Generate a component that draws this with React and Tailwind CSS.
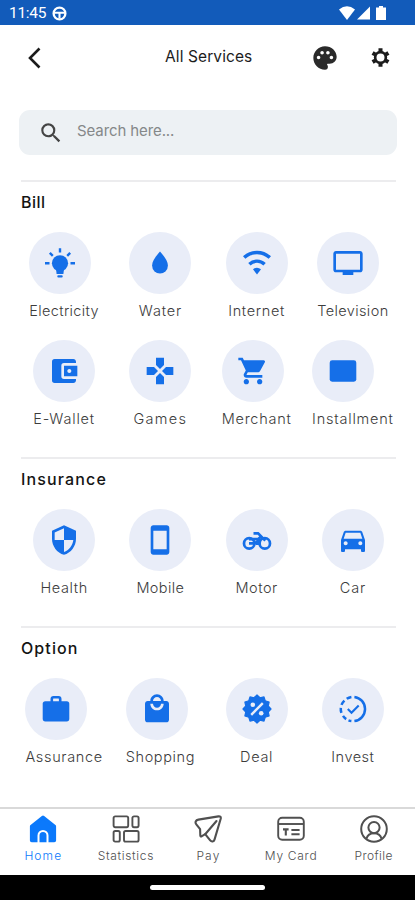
import React from 'react';
import {
    MdPalette,
    MdSearch,
    MdTv,
    MdAccountBalanceWallet,
    MdGames,
    MdShoppingCart,
    MdSecurity,
    MdStayPrimaryPortrait,
    MdDirectionsCar,
    MdLocalMall,
} from 'react-icons/md';

// Icons that the material set doesn't have
const GearIcon = ({ className }) => (
    <svg viewBox="0 0 22 22" className={className} fill="none" stroke="currentColor">
        <circle cx="11" cy="11" r="5.6" strokeWidth="2.8" />
        <path
            d="M11 1.400v3.600M11 17v3.600M2.700 6.200l3.100 1.800M16.200 14l3.100 1.800M2.700 15.800l3.100-1.800M16.200 8l3.100-1.800"
            strokeWidth="4.2"
        />
    </svg>
);

const BulbIcon = ({ className }) => (
    <svg viewBox="0 0 32 32" className={className} fill="currentColor">
        <circle cx="16" cy="16.300" r="8.1" />
        <path d="M12 22h8l-.6 5h-6.800z" />
        <rect x="13.3" y="28.2" width="5.4" height="2.4" rx="1" />
        <path d="M16 1.200v4.200M5.800 5.800l3 3M26.200 5.800l-3 3M1 16.200h4.500M26.500 16.200h4.500" stroke="currentColor" strokeWidth="2.4" />
    </svg>
);

const DropIcon = ({ className }) => (
    <svg viewBox="0 0 32 32" className={className} fill="currentColor">
        <path d="M16 4.500c-4.600 5.400-7.900 9.800-7.900 14.100a7.900 7.900 0 0 0 15.800 0c0-4.300-3.300-8.700-7.900-14.100z" />
    </svg>
);

const WifiIcon = ({ className }) => (
    <svg viewBox="0 0 32 32" className={className} fill="none" stroke="currentColor" strokeWidth="3.4">
        <path d="M3.200 10.600a18.500 18.500 0 0 1 25.600 0" />
        <path d="M8.400 17.200a11 11 0 0 1 15.200 0" />
        <path d="M12 22.300q4-3.300 8 0L16 27.600z" fill="currentColor" stroke="none" />
    </svg>
);

const CardIcon = ({ className }) => (
    <svg viewBox="0 0 32 32" className={className} fill="currentColor">
        <rect x="2.7" y="5.3" width="26.6" height="21.4" rx="2.4" />
    </svg>
);

const MotorIcon = ({ className }) => (
    <svg viewBox="0 0 32 32" className={className} fill="none" stroke="currentColor" strokeWidth="2.7">
        <circle cx="8.2" cy="19.4" r="5.2" />
        <circle cx="23.8" cy="19.4" r="5.2" />
        <path d="M12.500 9.400h4.600l7.200 7.200" />
        <path d="M8 15.200h9l3-2.600M8 19.400h5.200c1.600 0 4-2.400 5.600-5.200" />
        <path d="M13 18l2 3h3.500L19 15z" fill="currentColor" stroke="none" />
    </svg>
);

const BriefcaseIcon = ({ className }) => (
    <svg viewBox="0 0 32 32" className={className}>
        <rect x="2.7" y="8.2" width="26.6" height="20.2" rx="2.6" fill="currentColor" />
        <path d="M11.800 9V5.900q0-1.600 1.600-1.600h5.200q1.600 0 1.600 1.600V9" fill="none" stroke="currentColor" strokeWidth="2.6" />
    </svg>
);

const burst = Array.from({ length: 24 }, (_, i) => {
    const r = i % 2 ? 11.6 : 14;
    const a = (i * Math.PI) / 12;
    return `${(16 + r * Math.sin(a)).toFixed(2)},${(16 - r * Math.cos(a)).toFixed(2)}`;
}).join(' ');

const DealIcon = ({ className }) => (
    <svg viewBox="0 0 32 32" className={className}>
        <polygon points={burst} fill="currentColor" stroke="currentColor" strokeWidth="1.2" strokeLinejoin="round" />
        <path d="M21.800 10.200l-11.600 11.600" stroke="#e9edf8" strokeWidth="2.4" />
        <circle cx="11.8" cy="11.8" r="2.3" fill="#e9edf8" />
        <circle cx="20.2" cy="20.2" r="2.3" fill="#e9edf8" />
    </svg>
);

const InvestIcon = ({ className }) => (
    <svg viewBox="0 0 32 32" className={className} fill="none" stroke="currentColor" strokeWidth="2.5">
        <path d="M17.400 3.900a12.200 12.200 0 0 1 0 24.200" />
        <path d="M14.400 3.900a12.200 12.200 0 0 0-4.700 1.900M7.400 7.600a12.200 12.200 0 0 0-2.900 4.300M3.800 14.800a12.200 12.200 0 0 0 .6 5M6 22.900a12.200 12.200 0 0 0 3.200 3.200M11.500 27.400a12.200 12.200 0 0 0 2.900.7" />
        <path d="M10.800 16l3.700 3.700 7.200-7.200" strokeWidth="2.1" />
    </svg>
);

const HomeIcon = ({ className }) => (
    <svg viewBox="0 0 28 28" className={className}>
        <path d="M14 2.400L2.700 11.500v14h22.600v-14z" fill="currentColor" stroke="currentColor" strokeWidth="3.6" strokeLinejoin="round" />
        <path d="M9.500 28v-7.500a4.500 4.500 0 0 1 9 0V28" fill="none" stroke="#fff" strokeWidth="2" />
    </svg>
);

const StatsIcon = ({ className }) => (
    <svg viewBox="0 0 28 28" className={className} fill="none" stroke="currentColor" strokeWidth="1.9">
        <rect x="1.6" y="1.4" width="14.6" height="10.8" rx="1.6" />
        <rect x="20.4" y="1.4" width="6.2" height="10.8" rx="1.6" />
        <rect x="1.6" y="16" width="6.2" height="10.6" rx="1.6" />
        <rect x="12" y="16" width="14.6" height="10.6" rx="1.6" />
    </svg>
);

const PayIcon = ({ className }) => (
    <svg viewBox="0 0 28 28" className={className} fill="none" stroke="currentColor" strokeWidth="2.1" strokeLinejoin="round" strokeLinecap="round">
        <path d="M24.400 1.400L4.400 4.600C1.600 5.100.8 7.600 2.300 9.400l3.800 4.800.2 6.200q.2 1.800 1.600.8l3.300-2 5 6.200c1.400 1.700 3.700 1.300 4.300-.8L26.700 3.700q.6-2.600-2.300-2.300z" />
        <path d="M11.200 19.200L22.500 6" />
    </svg>
);

const MyCardIcon = ({ className }) => (
    <svg viewBox="0 0 28 28" className={className} fill="none" stroke="currentColor" strokeWidth="1.9">
        <rect x="1.2" y="2.8" width="25.6" height="22" rx="4" />
        <path d="M1.200 9h25.600" />
        <path d="M6 14.400h5.600M8.800 14.400v6M14.400 15h8.200M14.400 19.200h8.200" strokeWidth="2.1" />
    </svg>
);

const ProfileIcon = ({ className }) => (
    <svg viewBox="0 0 28 28" className={className} fill="none" stroke="currentColor" strokeWidth="2">
        <circle cx="14" cy="14" r="12.8" />
        <circle cx="14" cy="12.6" r="5.6" />
        <path d="M6.400 23.800c1-3.600 3.800-5.600 7.600-5.600s6.600 2 7.600 5.600" />
    </svg>
);

const sections = [
    {
        title: 'Bill',
        titleClass: 'tracking-[0.5px]',
        items: [
            { label: 'Electricity', icon: BulbIcon, tracking: 'tracking-[0.35px]' },
            { label: 'Water', icon: DropIcon, tracking: 'tracking-[0.8px]' },
            { label: 'Internet', icon: WifiIcon, tracking: 'tracking-[0.65px]' },
            { label: 'Television', icon: MdTv, tracking: 'tracking-[0.4px]' },
            { label: 'E-Wallet', icon: MdAccountBalanceWallet, tracking: 'tracking-[0.8px]' },
            { label: 'Games', icon: MdGames, tracking: 'tracking-[1.3px]' },
            { label: 'Merchant', icon: MdShoppingCart, tracking: 'tracking-[0.75px]' },
            { label: 'Installment', icon: CardIcon, tracking: 'tracking-[0.8px]' },
        ],
    },
    {
        title: 'Insurance',
        titleClass: 'tracking-[1.15px]',
        items: [
            { label: 'Health', icon: MdSecurity, tracking: 'tracking-[0.6px]' },
            { label: 'Mobile', icon: MdStayPrimaryPortrait, tracking: 'tracking-[0.4px]' },
            { label: 'Motor', icon: MotorIcon, tracking: 'tracking-[0.5px]' },
            { label: 'Car', icon: MdDirectionsCar, tracking: 'tracking-[0.8px]' },
        ],
    },
    {
        title: 'Option',
        titleClass: 'tracking-[1.1px]',
        items: [
            { label: 'Assurance', icon: BriefcaseIcon, tracking: 'tracking-[0.65px]' },
            { label: 'Shopping', icon: MdLocalMall, tracking: 'tracking-[0.6px]' },
            { label: 'Deal', icon: DealIcon, tracking: 'tracking-[0.7px]' },
            { label: 'Invest', icon: InvestIcon, tracking: 'tracking-[0.5px]' },
        ],
    },
];

const tabs = [
    { label: 'Home', icon: HomeIcon, active: true, tracking: 'tracking-[1.1px]' },
    { label: 'Statistics', icon: StatsIcon, tracking: 'tracking-[0.65px]' },
    { label: 'Pay', icon: PayIcon, tracking: 'tracking-[1.2px]' },
    { label: 'My Card', icon: MyCardIcon, tracking: 'tracking-[0.7px]' },
    { label: 'Profile', icon: ProfileIcon, tracking: 'tracking-[0.4px]' },
];

const StatusBar = () => (
    <div className="h-[25px] bg-[#125bba] flex items-center pl-[9px] pr-[29px] text-white">
        <span className="font-[Roboto] text-[15.5px] leading-none pt-[3px] tracking-[-0.3px]">11:45</span>
        <svg viewBox="0 0 16 16" className="size-[15px] ml-[6px] mt-[2px]" fill="none" stroke="currentColor">
            <circle cx="8" cy="8" r="6.3" strokeWidth="2.4" />
            <path d="M2 7.200h12M8 8v5" strokeWidth="2.2" />
        </svg>
        <div className="ml-auto flex items-center gap-[2px] pt-[1px]">
            <svg viewBox="0 0 16 14" className="w-[16px] h-[14px]" fill="currentColor">
                <path d="M0 3.600Q8-3 16 3.600L8 14z" />
            </svg>
            <svg viewBox="0 0 14 14" className="w-[13px] h-[14px]" fill="currentColor">
                <path d="M14 0v14H0z" />
            </svg>
            <svg viewBox="0 0 10 14" className="w-[10px] h-[14px] ml-[4px]" fill="currentColor">
                <path d="M3 0h4v1.500h3V14H0V1.500h3z" />
            </svg>
        </div>
    </div>
);

const ServiceItem = ({ item }) => {
    const Icon = item.icon;
    return (
        <div className="min-w-[62px]">
            <div className="size-[62px] rounded-full bg-[#e9edf8] flex items-center justify-center text-[#156fe8]">
                <Icon className="size-8" />
            </div>
            <p className={`mt-[7px] h-5 text-center whitespace-nowrap text-[14.5px] leading-5 font-light text-[#3c3c3c] ${item.tracking}`}>
                {item.label}
            </p>
        </div>
    );
};

const ServiceSection = ({ section }) => (
    <section className="h-[169px] first:h-[277px]">
        <div className="ml-[21px] mr-[19px] h-[2px] bg-[#ececee]" />
        <h2 className={`ml-[21px] mt-[8px] h-6 leading-6 text-[16px] font-medium text-[#141414] ${section.titleClass}`}>{section.title}</h2>
        <div className="mt-[18px] ml-[16px] mr-[14px] grid grid-cols-4 gap-y-[19px] justify-items-center">
            {section.items.map((item) => (
                <ServiceItem key={item.label} item={item} />
            ))}
        </div>
    </section>
);

export default function App() {
    return (
        <div className="w-[415px] h-[900px] bg-white flex flex-col overflow-hidden font-[Inter,sans-serif]">
            <StatusBar />

            <header className="h-[65px] pl-[24px] pr-[24px] flex items-center text-[#1c1c1c]">
                <svg viewBox="0 0 20 24" className="w-[20px] h-[24px]" fill="none" stroke="currentColor" strokeWidth="2.6">
                    <path d="M15.500 2.500L6 12l9.500 9.500" />
                </svg>
                <h1 className="ml-[121px] -mt-[2px] text-[15.5px] font-normal tracking-[0.1px]">All Services</h1>
                <div className="ml-auto flex items-center gap-[31px]">
                    <MdPalette className="size-[28px] text-[#2a2a2a]" />
                    <GearIcon className="size-[21px]" />
                </div>
            </header>

            <div className="mt-[20px] ml-[19px] mr-[18px] h-[45px] shrink-0 rounded-[11px] bg-[#edf1f4] flex items-center pl-[19px]">
                <MdSearch className="size-[26px] text-[#444]" />
                <span className="ml-[13px] -mt-[3px] text-[15px] tracking-[-0.1px] text-[#858889]">Search here...</span>
            </div>

            <main className="mt-[25px] flex-1">
                {sections.map((section) => (
                    <ServiceSection key={section.title} section={section} />
                ))}
            </main>

            <nav className="h-[68px] shrink-0 border-t-2 border-[#d9d9d9] bg-white grid grid-cols-5 pl-[2px]">
                {tabs.map(({ label, icon: Icon, active, tracking }) => (
                    <div key={label} className={`flex flex-col items-center pt-[6px] ${active ? 'text-[#0b79fb]' : 'text-[#505050]'}`}>
                        <Icon className="size-[28px]" />
                        <span className={`mt-[5px] text-[12px] leading-4 font-light whitespace-nowrap ${tracking}`}>{label}</span>
                    </div>
                ))}
            </nav>

            <div className="h-[25px] shrink-0 bg-black flex justify-center items-center">
                <div className="w-[115px] h-[5px] rounded-full bg-white" />
            </div>
        </div>
    );
}
